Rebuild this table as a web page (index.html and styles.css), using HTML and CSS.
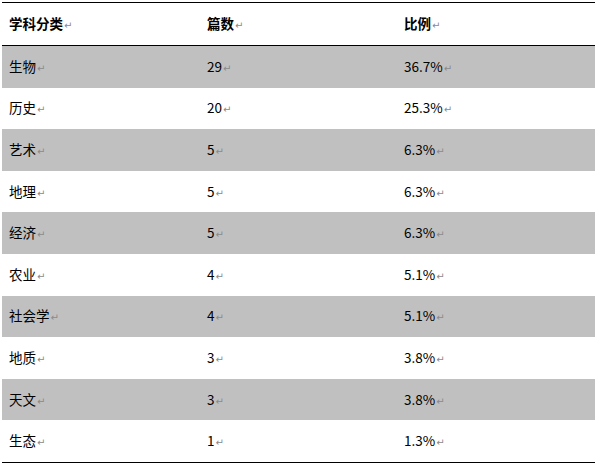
FILE: index.html
```html
<!DOCTYPE html>
<html lang="zh-CN">
<head>
    <meta charset="UTF-8">
    <title>学科分类</title>
    <link rel="stylesheet" href="styles.css">
</head>
<body>
    <table class="stats">
        <thead>
            <tr>
                <th>学科分类<span class="mark">↵</span></th>
                <th>篇数<span class="mark">↵</span></th>
                <th>比例<span class="mark">↵</span></th>
            </tr>
        </thead>
        <tbody>
            <tr class="shade"><td>生物<span class="mark">↵</span></td><td>29<span class="mark">↵</span></td><td>36.7%<span class="mark">↵</span></td></tr>
            <tr><td>历史<span class="mark">↵</span></td><td>20<span class="mark">↵</span></td><td>25.3%<span class="mark">↵</span></td></tr>
            <tr class="shade"><td>艺术<span class="mark">↵</span></td><td>5<span class="mark">↵</span></td><td>6.3%<span class="mark">↵</span></td></tr>
            <tr><td>地理<span class="mark">↵</span></td><td>5<span class="mark">↵</span></td><td>6.3%<span class="mark">↵</span></td></tr>
            <tr class="shade"><td>经济<span class="mark">↵</span></td><td>5<span class="mark">↵</span></td><td>6.3%<span class="mark">↵</span></td></tr>
            <tr><td>农业<span class="mark">↵</span></td><td>4<span class="mark">↵</span></td><td>5.1%<span class="mark">↵</span></td></tr>
            <tr class="shade"><td>社会学<span class="mark">↵</span></td><td>4<span class="mark">↵</span></td><td>5.1%<span class="mark">↵</span></td></tr>
            <tr><td>地质<span class="mark">↵</span></td><td>3<span class="mark">↵</span></td><td>3.8%<span class="mark">↵</span></td></tr>
            <tr class="shade"><td>天文<span class="mark">↵</span></td><td>3<span class="mark">↵</span></td><td>3.8%<span class="mark">↵</span></td></tr>
            <tr><td>生态<span class="mark">↵</span></td><td>1<span class="mark">↵</span></td><td>1.3%<span class="mark">↵</span></td></tr>
        </tbody>
    </table>
</body>
</html>
```

FILE: styles.css
```css
body {
    margin: 2px 0 0 2px;
    font-family: "Noto Sans CJK SC", "Noto Sans", sans-serif;
    font-size: 13.5px;
    color: #000;
    background: #fff;
}
.stats {
    width: 593px;
    border-collapse: collapse;
    table-layout: fixed;
    border-top: 1px solid #000;
    border-bottom: 1.5px solid #000;
}
.stats th,
.stats td {
    padding: 0 0 0 7px;
    text-align: left;
    vertical-align: middle;
    white-space: nowrap;
    line-height: 1;
}
.stats th {
    height: 42px;
    font-weight: bold;
    border-bottom: 1.5px solid #000;
}
.stats th:nth-child(1) { width: 191px; }
.stats th:nth-child(2) { width: 190px; }
.stats td {
    height: 41.6px;
}
.stats tr.shade td {
    background: #c0c0c0;
}
.mark {
    font-family: "DejaVu Sans", sans-serif;
    font-size: 10px;
    font-weight: normal;
    color: #8a8a8a;
    margin-left: 1px;
}
```
